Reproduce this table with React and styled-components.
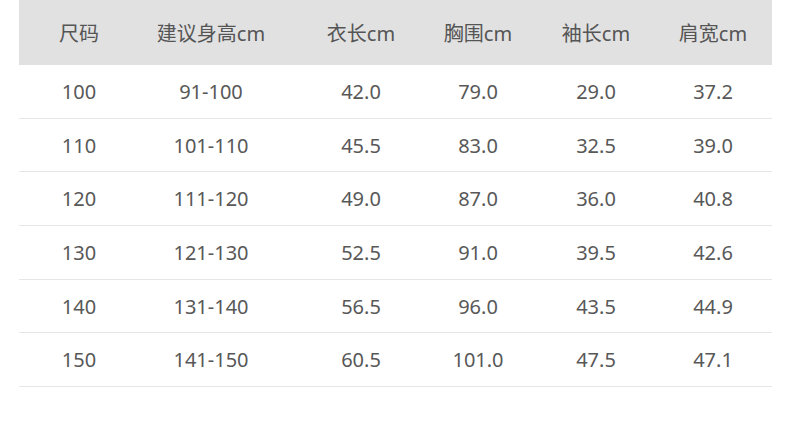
import React from "react";
import styled, { createGlobalStyle } from "styled-components";

const Global = createGlobalStyle`
  html, body { margin: 0; padding: 0; background: #fff; }
  body { font-family: "Noto Sans", "Noto Sans CJK SC", sans-serif; }
`;

const Page = styled.div`
  width: 790px;
  height: 431px;
  padding: 0 18px 0 19px;
  box-sizing: border-box;
  background: #fff;
`;

const Table = styled.div`
  display: grid;
  grid-template-columns: 120px 144px 156px 78px 158px 97px;
  width: 753px;
`;

const HeadCell = styled.div`
  height: 65px;
  background: #e1e1e1;
  display: flex;
  align-items: center;
  justify-content: ${(p) => (p.$last ? "flex-start" : "center")};
  font-size: 20px;
  color: #555;
  white-space: nowrap;
`;

const Cell = styled.div`
  height: 53.7px;
  box-sizing: border-box;
  border-bottom: 1px solid #e6e6e6;
  display: flex;
  align-items: center;
  justify-content: ${(p) => (p.$last ? "flex-start" : "center")};
  font-size: 20px;
  color: #585858;
  white-space: nowrap;
`;

const LastWrap = styled.span`
  display: inline-block;
  width: 76px;
  text-align: center;
`;

const headers = ["尺码", "建议身高cm", "衣长cm", "胸围cm", "袖长cm", "肩宽cm"];
const rows = [
  ["100", "91-100", "42.0", "79.0", "29.0", "37.2"],
  ["110", "101-110", "45.5", "83.0", "32.5", "39.0"],
  ["120", "111-120", "49.0", "87.0", "36.0", "40.8"],
  ["130", "121-130", "52.5", "91.0", "39.5", "42.6"],
  ["140", "131-140", "56.5", "96.0", "43.5", "44.9"],
  ["150", "141-150", "60.5", "101.0", "47.5", "47.1"],
];

export default function App() {
  return (
    <>
      <Global />
      <Page>
        <Table>
          {headers.map((h, i) => (
            <HeadCell key={h} $last={i === 5}>
              {i === 5 ? <LastWrap>{h}</LastWrap> : h}
            </HeadCell>
          ))}
          {rows.map((r) =>
            r.map((v, i) => (
              <Cell key={r[0] + i} $last={i === 5}>
                {i === 5 ? <LastWrap>{v}</LastWrap> : v}
              </Cell>
            ))
          )}
        </Table>
      </Page>
    </>
  );
}
